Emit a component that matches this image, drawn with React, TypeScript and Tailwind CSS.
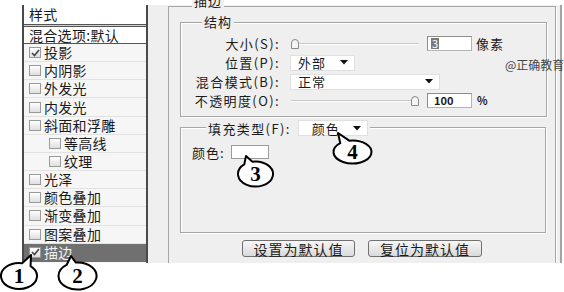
import React from 'react';

const cjk = { fontFamily: '"Noto Sans CJK SC", "Noto Sans", sans-serif' };

type Row = { label: string; indent?: boolean; checked?: boolean; active?: boolean };

const rows: Row[] = [
  { label: '投影', checked: true },
  { label: '内阴影' },
  { label: '外发光' },
  { label: '内发光' },
  { label: '斜面和浮雕' },
  { label: '等高线', indent: true },
  { label: '纹理', indent: true },
  { label: '光泽' },
  { label: '颜色叠加' },
  { label: '渐变叠加' },
  { label: '图案叠加' },
  { label: '描边', checked: true, active: true },
];

function CheckBox({ checked }: { checked?: boolean }) {
  return (
    <span className="w-[12px] h-[11px] border border-[#9a9a9a] bg-gradient-to-b from-white to-[#dedede] flex items-center justify-center shrink-0">
      {checked && (
        <svg width="9" height="8" viewBox="0 0 9 8">
          <path d="M1 4 L3.5 6.5 L8 1" fill="none" stroke="#444" strokeWidth="1.6" />
        </svg>
      )}
    </span>
  );
}

function Arrow() {
  return (
    <svg width="8" height="5" viewBox="0 0 8 5">
      <path d="M0 0 H8 L4 4.5 Z" fill="#111" />
    </svg>
  );
}

function Slider({ knob }: { knob: 'left' | 'right' }) {
  return (
    <div className="relative w-[128px] h-[12px] flex items-center">
      <div className="w-full h-[2px] bg-[#c8c8c8] border-b border-white" />
      <div
        className={
          'absolute top-[1px] w-[8px] h-[10px] rounded-t-full border border-[#8a8a8a] bg-[#f4f4f4] ' +
          (knob === 'left' ? 'left-0' : 'right-0')
        }
      />
    </div>
  );
}

function Label({ children }: { children: React.ReactNode }) {
  return <span className="text-right pr-[5px] tracking-[1.4px]">{children}</span>;
}

// speech bubble: ellipse with a pointed tail
function bubble(cx: number, cy: number, rx: number, ry: number, a: number, tx: number, ty: number) {
  const rad = (d: number) => (d * Math.PI) / 180;
  const b = a - 30;
  const A = [cx + rx * Math.cos(rad(a)), cy + ry * Math.sin(rad(a))];
  const B = [cx + rx * Math.cos(rad(b)), cy + ry * Math.sin(rad(b))];
  return `M ${B[0]} ${B[1]} L ${tx} ${ty} L ${A[0]} ${A[1]} A ${rx} ${ry} 0 1 1 ${B[0]} ${B[1]} Z`;
}

const callouts = [
  { n: '1', cx: 19, cy: 276, rx: 18, ry: 13, a: -50, tx: 31, ty: 255 },
  { n: '2', cx: 77.5, cy: 276, rx: 19, ry: 13.5, a: -95, tx: 71, ty: 256 },
  { n: '3', cx: 255.5, cy: 174, rx: 17.5, ry: 12.5, a: -100, tx: 246, ty: 156 },
  { n: '4', cx: 352.5, cy: 152, rx: 19, ry: 11.5, a: -100, tx: 338, ty: 133 },
];

export default function App() {
  return (
    <div className="relative w-[564px] h-[292px] bg-white overflow-hidden text-[#1a1a1a]" style={cjk}>
      <div className="flex ml-[22px] mt-[5px] w-[540px] h-[258px] bg-[#efefef] border-r-2 border-[#a4a4a4]">
        {/* styles list */}
        <div className="w-[126px] h-full flex flex-col border-x-2 border-[#4a4a4a] bg-[#f6f6f6] text-[14px] tracking-[0.3px]">
          <div className="h-[19px] bg-white flex items-center pl-[5px] leading-[15px]">样式</div>
          <div className="h-[3px] border-y border-[#555] bg-[#cfcfcf]" />
          <div className="h-[17px] bg-white flex items-center pl-[5px] leading-[15px] border-b border-[#555]">
            混合选项:默认
          </div>
          {rows.map((r) => (
            <div
              key={r.label}
              className={
                'h-[18.17px] flex items-center gap-[3px] leading-[15px] border-b ' +
                (r.active ? 'bg-[#707070] text-[#f2f2f2] border-[#707070]' : 'border-[#e2e2e2]') +
                (r.indent ? ' pl-[25px]' : ' pl-[5px]')
              }
            >
              <CheckBox checked={r.checked} />
              <span>{r.label}</span>
            </div>
          ))}
        </div>

        {/* stroke group */}
        <div className="ml-[20px] mt-[1px] w-[388px] h-[257px] relative border-l border-t border-r border-[#a6a6a6] shadow-[1px_1px_0_#fff]">
          <span className="absolute left-[23px] top-[-13px] px-[2px] bg-[#efefef] text-[13px] leading-[14px] tracking-[1px]">
            描边
          </span>

          {/* structure */}
          <div className="relative ml-[11px] mr-[8px] mt-[15px] h-[95px] border border-[#a6a6a6] shadow-[inset_1px_1px_0_#fff,1px_1px_0_#fff] text-[13px] leading-none">
            <span className="absolute left-[21px] top-[-8px] px-[2px] bg-[#efefef] tracking-[1px]">结构</span>
            <div className="pt-[11px] grid grid-cols-[104px_1fr] auto-rows-[19px] items-center">
              <Label>大小(S):</Label>
              <div className="flex items-center pl-[6px]">
                <Slider knob="left" />
                <div className="ml-[8px] w-[45px] h-[15px] bg-white border border-[#b4b4b4] border-t-[#8c8c8c] border-l-[#8c8c8c] flex items-center pl-[3px]">
                  <span className="bg-[#7a7a7a] text-white text-[11px] px-[1px] leading-[11px]">3</span>
                </div>
                <span className="ml-[4px] tracking-[1px]">像素</span>
              </div>

              <Label>位置(P):</Label>
              <div className="flex items-center pl-[5px]">
                <div className="w-[65px] h-[16px] bg-white border border-[#e0e0e0] flex items-center justify-between pl-[7px] pr-[6px]">
                  <span className="tracking-[1px]">外部</span>
                  <Arrow />
                </div>
              </div>

              <Label>混合模式(B):</Label>
              <div className="flex items-center pl-[5px]">
                <div className="w-[150px] h-[16px] bg-white border border-[#e0e0e0] flex items-center justify-between pl-[7px] pr-[6px]">
                  <span className="tracking-[1px]">正常</span>
                  <Arrow />
                </div>
              </div>

              <Label>不透明度(O):</Label>
              <div className="flex items-center pl-[6px]">
                <Slider knob="right" />
                <div className="ml-[8px] w-[45px] h-[15px] bg-white border border-[#b4b4b4] border-t-[#8c8c8c] border-l-[#8c8c8c] flex items-center pl-[6px] text-[11px] font-bold">
                  100
                </div>
                <span className="ml-[5px] text-[11px] font-bold">%</span>
              </div>
            </div>
          </div>

          {/* fill type */}
          <div className="relative ml-[11px] mr-[9px] mt-[10px] h-[106px] border border-[#a6a6a6] shadow-[inset_1px_1px_0_#fff,1px_1px_0_#fff] text-[13px] leading-none">
            <div className="absolute left-[25px] top-[-8px] flex items-center gap-[7px] px-[2px] bg-[#efefef]">
              <span className="tracking-[1.4px]">填充类型(F):</span>
              <div className="w-[70px] h-[16px] bg-white border border-[#e0e0e0] flex items-center justify-between pl-[13px] pr-[6px]">
                <span className="tracking-[1px]">颜色</span>
                <Arrow />
              </div>
            </div>
            <div className="pt-[17px] pl-[11px] flex items-center">
              <span className="tracking-[1px]">颜色:</span>
              <div className="ml-[6px] w-[38px] h-[14px] bg-white border border-[#9a9a9a]" />
            </div>
          </div>

          {/* buttons */}
          <div className="mt-[7px] flex justify-center gap-[13px] text-[14px] leading-none tracking-[1px]">
            <button className="w-[113px] h-[17px] rounded-[3px] border border-[#707070] bg-gradient-to-b from-[#f7f7f7] to-[#dadada] flex items-center justify-center">
              设置为默认值
            </button>
            <button className="w-[114px] h-[17px] rounded-[3px] border border-[#707070] bg-gradient-to-b from-[#f7f7f7] to-[#dadada] flex items-center justify-center">
              复位为默认值
            </button>
          </div>
        </div>
      </div>

      {/* watermark */}
      <span className="absolute left-[505px] top-[56px] text-[12px] text-[#444] whitespace-nowrap">@正确教育</span>

      {/* callouts */}
      <svg className="absolute inset-0 pointer-events-none" width="564" height="292">
        {callouts.map((c) => (
          <g key={c.n}>
            <path d={bubble(c.cx, c.cy, c.rx, c.ry, c.a, c.tx, c.ty)} fill="#fff" stroke="#000" strokeWidth="2" strokeLinejoin="round" />
            <text
              x={c.cx}
              y={c.cy + 7}
              textAnchor="middle"
              fontFamily='"Liberation Serif", serif'
              fontWeight="bold"
              fontSize="21"
              fill="#000"
            >
              {c.n}
            </text>
          </g>
        ))}
      </svg>
    </div>
  );
}
